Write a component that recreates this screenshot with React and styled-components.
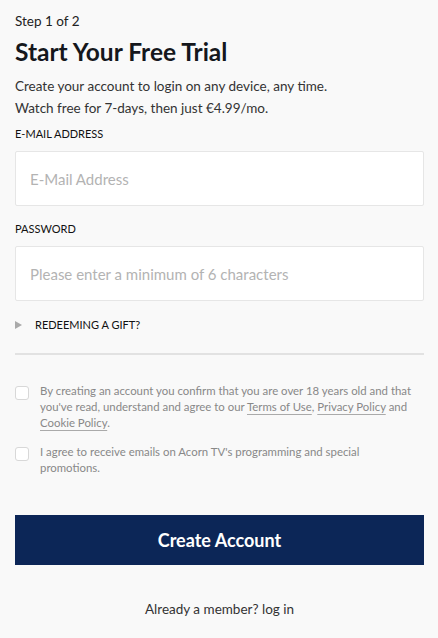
import styled, { createGlobalStyle } from 'styled-components';

const GlobalStyle = createGlobalStyle`
  html, body {
    margin: 0;
    padding: 0;
    background: #f9f9f9;
  }
  body {
    font-family: Lato, 'Noto Sans', sans-serif;
    color: #222;
  }
`;

export default function App() {
  return (
    <>
      <GlobalStyle />
      <Page>
        <Step>Step 1 of 2</Step>
        <Title>Start Your Free Trial</Title>
        <Intro>
          Create your account to login on any device, any time.
          <br />
          Watch free for 7-days, then just €4.99/mo.
        </Intro>

        <Label>E-MAIL ADDRESS</Label>
        <Input type="email" placeholder="E-Mail Address" />

        <Label>PASSWORD</Label>
        <Input type="password" placeholder="Please enter a minimum of 6 characters" />

        <Gift>
          <Triangle />
          <span>REDEEMING A GIFT?</span>
        </Gift>

        <Divider />

        <CheckRow>
          <Box />
          <CheckText>
            By creating an account you confirm that you are over 18 years old and that
            you've read, understand and agree to our <TextLink>Terms of Use</TextLink>,{' '}
            <TextLink>Privacy Policy</TextLink> and <TextLink>Cookie Policy</TextLink>.
          </CheckText>
        </CheckRow>
        <CheckRow>
          <Box />
          <CheckText>
            I agree to receive emails on Acorn TV's programming and special promotions.
          </CheckText>
        </CheckRow>

        <Button>Create Account</Button>

        <Member>Already a member? log in</Member>
      </Page>
    </>
  );
}

const Page = styled.div`
  width: 409px;
  padding: 12px 14px 20px 15px;
  display: flex;
  flex-direction: column;
`;

const Step = styled.div`
  font-size: 13.5px;
  line-height: 18px;
  color: #222;
`;

const Title = styled.h1`
  margin: 7px 0 0;
  font-family: Lato, sans-serif;
  font-weight: 700;
  font-size: 24.5px;
  line-height: 30px;
  color: #15171c;
`;

const Intro = styled.p`
  margin: 8px 0 0;
  font-size: 13.5px;
  line-height: 22px;
  color: #333;
`;

const Label = styled.div`
  margin-top: 7px;
  font-family: Lato, sans-serif;
  font-size: 11px;
  line-height: 16px;
  color: #111;
  & + input {
    margin-top: 9px;
  }
`;

const Input = styled.input`
  box-sizing: border-box;
  width: 100%;
  height: 55px;
  margin-bottom: 8px;
  padding: 0 14px;
  border: 1px solid #e6e6e6;
  border-radius: 2px;
  background: #fff;
  font-family: Lato, sans-serif;
  font-size: 15px;
  outline: none;
  &::placeholder {
    color: #b3b3b3;
  }
`;

const Gift = styled.div`
  display: flex;
  align-items: center;
  gap: 13px;
  margin-top: 9px;
  font-family: Lato, sans-serif;
  font-size: 11px;
  color: #111;
`;

const Triangle = styled.span`
  width: 0;
  height: 0;
  border-top: 4px solid transparent;
  border-bottom: 4px solid transparent;
  border-left: 7px solid #aaa;
`;

const Divider = styled.div`
  height: 2px;
  background: #e2e2e2;
  margin: 22px 0 28px;
`;

const CheckRow = styled.label`
  display: flex;
  align-items: flex-start;
  gap: 11px;
  margin-bottom: 13px;
`;

const Box = styled.span`
  flex: none;
  box-sizing: border-box;
  width: 14px;
  height: 14px;
  margin-top: 3px;
  border: 1px solid #d8d8d8;
  border-radius: 3px;
  background: #fff;
`;

const CheckText = styled.span`
  padding-right: 8px;
  font-size: 11.4px;
  line-height: 16px;
  color: #888;
`;

const TextLink = styled.span`
  text-decoration: underline;
  text-decoration-color: #aaa;
  text-underline-offset: 3px;
`;

const Button = styled.button`
  margin-top: 26px;
  height: 50px;
  border: none;
  background: #0c2657;
  color: #fff;
  font-family: Lato, sans-serif;
  font-weight: 700;
  font-size: 18px;
  cursor: pointer;
`;

const Member = styled.div`
  margin-top: 36px;
  text-align: center;
  font-size: 13.5px;
  color: #333;
`;
